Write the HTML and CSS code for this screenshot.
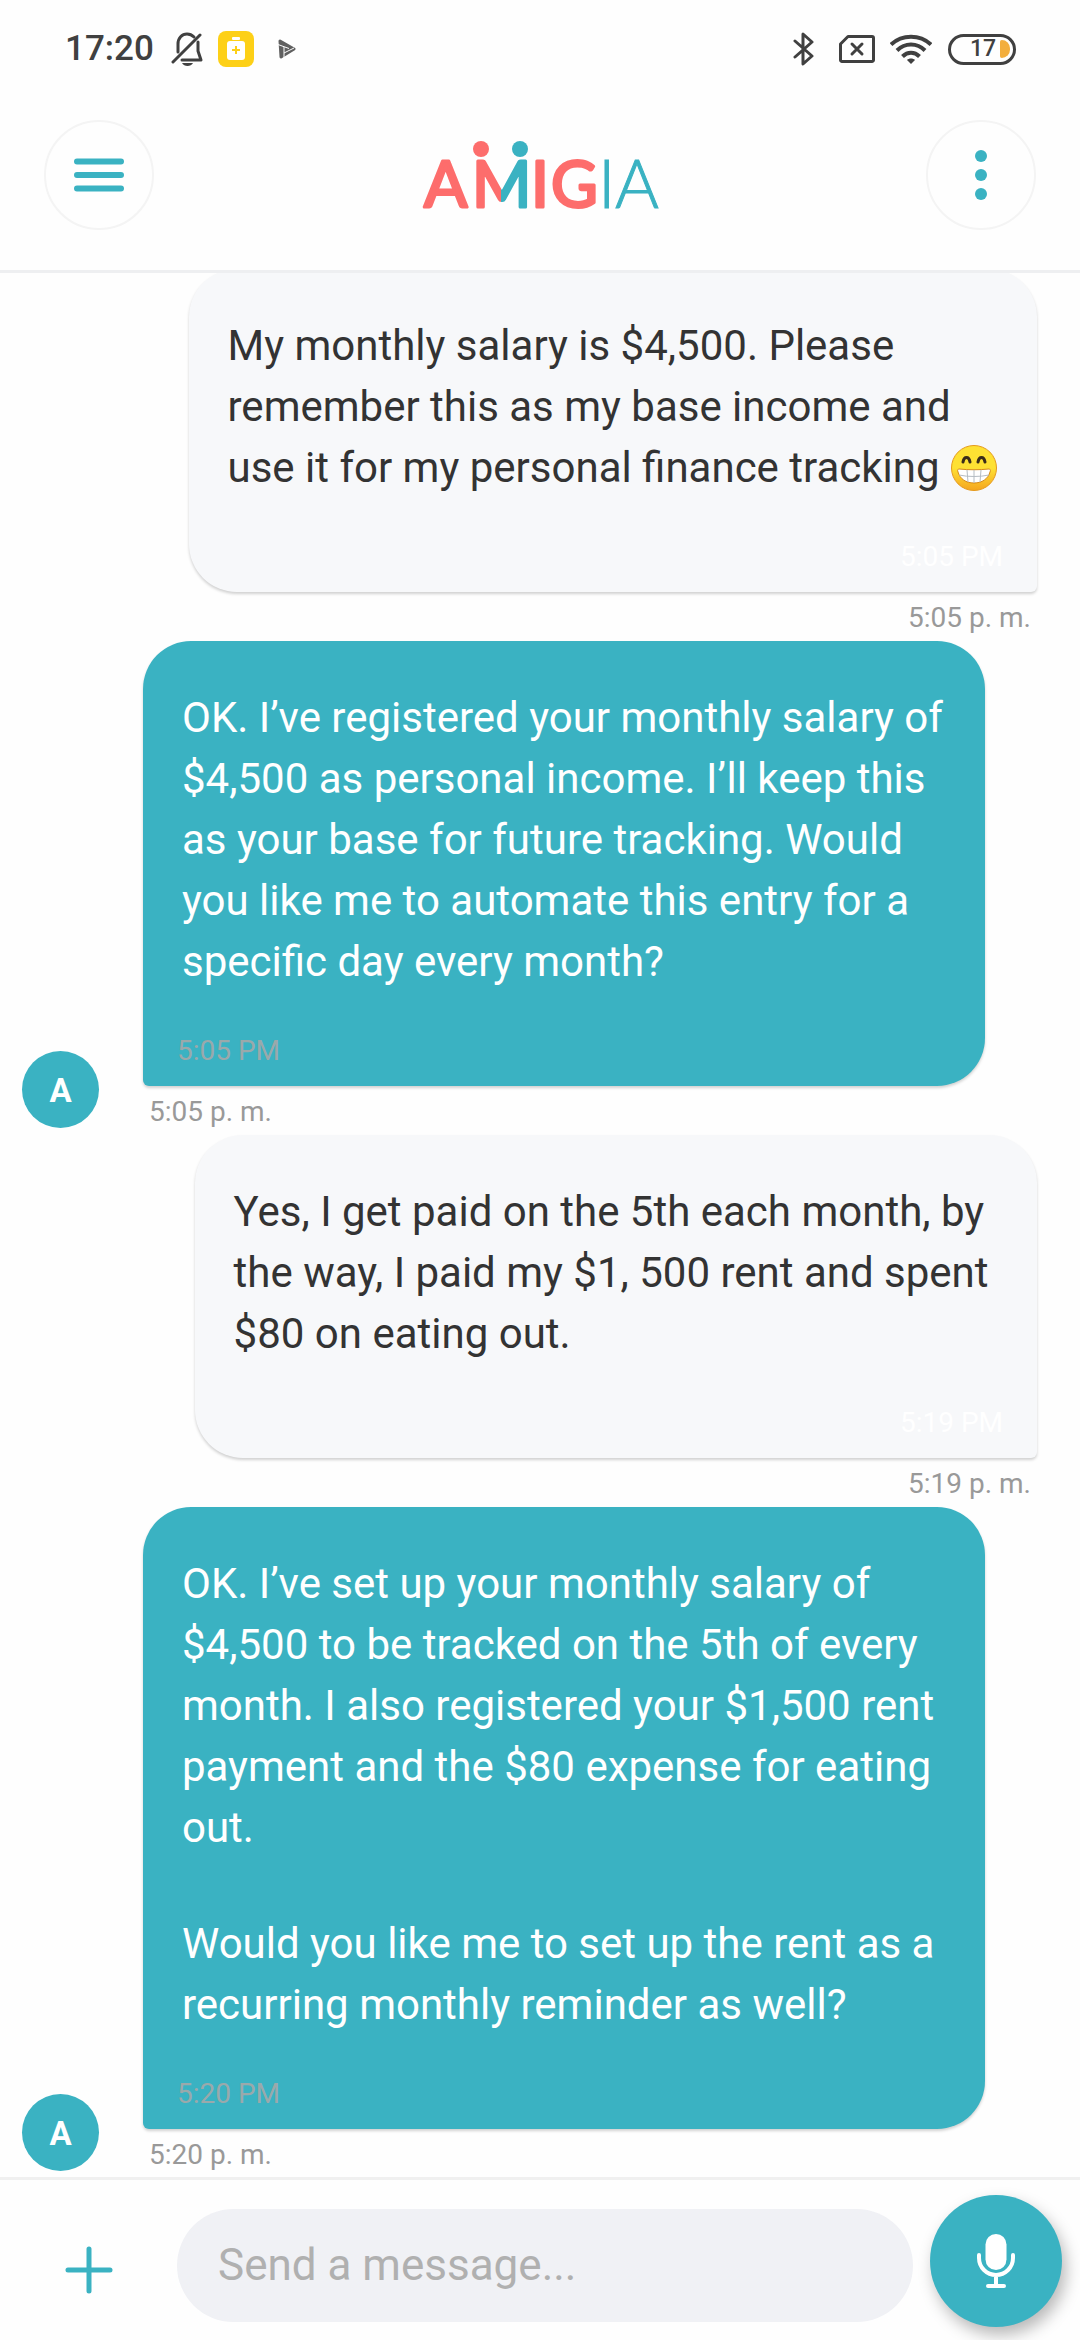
FILE: index.html
```html
<!DOCTYPE html>
<html lang="en">
<head>
<meta charset="utf-8">
<meta name="viewport" content="width=device-width, initial-scale=1">
<title>Amigia</title>
<link rel="stylesheet" href="styles.css">
</head>
<body>
<div class="app">
  <div class="status">
    <span class="clock">17:20</span>
    <svg class="bell" width="32" height="34" viewBox="0 0 32 34" fill="none" stroke="#404040" stroke-width="3" stroke-linecap="round" stroke-linejoin="round">
      <path d="M7 20V12C7 6 11 2 16 2c3 0 5 1 7 3M27 10v9l3 9H11"/><path d="M2 30 29 3"/><path d="M11 31h11c-2 4-9 4-11 0z" fill="#404040" stroke="none"/>
    </svg>
    <svg class="saver" width="36" height="36" viewBox="0 0 36 36">
      <rect width="36" height="36" rx="8" fill="#fdd017"/>
      <rect x="14" y="6" width="8" height="3" rx="1" fill="#fff"/><rect x="9" y="10" width="18" height="19" rx="3" fill="#fff"/>
      <path d="M18 15v8M14 19h8" stroke="#fdd017" stroke-width="2"/>
    </svg>
    <svg class="play" width="18" height="20" viewBox="0 0 18 20">
      <path d="M2 2 16 10 3 18z" fill="#606060" stroke="#606060" stroke-width="3" stroke-linejoin="round"/>
      <path d="M0 5.500 11 9.500M6 8v12M6 14l10-5" stroke="#fefefe" stroke-width="1" fill="none"/>
    </svg>
    <svg class="bt" width="22" height="34" viewBox="0 0 22 34" fill="none" stroke="#404040" stroke-width="3" stroke-linecap="round" stroke-linejoin="round">
      <path d="M2 9 19 24 10 32V2l9 8L2 25"/>
    </svg>
    <svg class="sim" width="36" height="28" viewBox="0 0 36 28" fill="none" stroke="#404040" stroke-width="3" stroke-linecap="round" stroke-linejoin="round">
      <path d="M9 1.500H33a1.500 1.500 0 0 1 1.500 1.500V25a1.500 1.500 0 0 1-1.500 1.500H3A1.500 1.500 0 0 1 1.500 25V9z"/><path d="M13 9l10 10M23 9 13 19"/>
    </svg>
    <svg class="wifi" width="42" height="30" viewBox="0 0 42 30" fill="none" stroke="#404040" stroke-width="4">
      <path d="M1 10.500C12 0 30 0 41 10.500M7 16.500c8-8 20-8 28 0M12.500 22.500c5-5 12-5 17 0"/><path d="M21 30l-4-4c2-2 6-2 8 0z" fill="#404040" stroke="none"/>
    </svg>
    <span class="battery">17<i class="charge"></i></span>
  </div>

  <header class="header">
    <button class="round" type="button" aria-label="Menu">
      <svg width="50" height="34" viewBox="0 0 50 34" stroke="#3ab2c2" stroke-width="6" stroke-linecap="round"><path d="M3 3.500h44M3 17h44M3 30.500h44"/></svg>
    </button>
    <svg class="logo" width="240" height="100" viewBox="0 0 240 100" role="img" aria-label="Amigia">
      <defs><linearGradient id="split" gradientUnits="userSpaceOnUse" x1="55" x2="107" y1="0" y2="0"><stop offset=".5" stop-color="#fd6d6c"/><stop offset=".5" stop-color="#3ab2c2"/></linearGradient></defs>
      <circle cx="61" cy="24" r="8" fill="#fd6d6c"/><circle cx="100" cy="24" r="8" fill="#3ab2c2"/>
      <g class="bold" fill="#fd6d6c" stroke="#fd6d6c"><text x="4" y="82">A</text><text x="52" y="82" fill="url(#split)" stroke="url(#split)">M</text><text x="111" y="82">I</text><text x="131" y="82">G</text></g>
      <g class="thin" fill="#3ab2c2" stroke="#3ab2c2"><text x="178" y="83">I</text><text x="195" y="83">A</text></g>
    </svg>
    <button class="round" type="button" aria-label="More options">
      <svg width="12" height="52" viewBox="0 0 12 52" fill="#3ab2c2"><circle cx="6" cy="7" r="6"/><circle cx="6" cy="26" r="6"/><circle cx="6" cy="45" r="6"/></svg>
    </button>
  </header>

  <main class="chat">
    <article class="message mine">
      <div class="stack">
        <div class="bubble">
          <p>My monthly salary is $4,500. Please<br>remember this as my base income and<br>use it for my personal finance tracking <svg class="emoji" width="48" height="48" viewBox="2 0 48 48" role="img" aria-label="Beaming face">
            <defs><linearGradient id="face" x2="0" y2="1"><stop offset=".5" stop-color="#fee133"/><stop offset="1" stop-color="#f5a51f"/></linearGradient></defs>
            <circle cx="26" cy="24" r="22.500" fill="url(#face)" stroke="#e59a1c"/>
            <path d="M15 18c1-6 6-6 7 0M30 18c1-6 6-6 7 0" fill="none" stroke="#3a2c1a" stroke-width="3" stroke-linecap="round"/>
            <path d="M11 25c9 1 21 1 30 0 1 0 2 1 1 3-2 7-8 11-16 11S12 35 10 28c-1-2 0-3 1-3z" fill="#fff" stroke="#d68a1a"/>
            <path d="M11 31c9 2 21 2 30 0M26 26v13M19 26l1 12M33 26l-1 12" fill="none" stroke="#b5bcc2"/>
          </svg></p>
          <time class="stamp">5:05 PM</time>
        </div>
        <time class="sent">5:05 p. m.</time>
      </div>
    </article>
    <article class="message bot">
      <span class="avatar">A</span>
      <div class="stack">
        <div class="bubble">
          <p>OK. I’ve registered your monthly salary of<br>$4,500 as personal income. I’ll keep this<br>as your base for future tracking. Would<br>you like me to automate this entry for a<br>specific day every month?</p>
          <time class="stamp">5:05 PM</time>
        </div>
        <time class="sent">5:05 p. m.</time>
      </div>
    </article>
    <article class="message mine">
      <div class="stack">
        <div class="bubble">
          <p>Yes, I get paid on the 5th each month, by<br>the way, I paid my $1, 500 rent and spent<br>$80 on eating out.</p>
          <time class="stamp">5:19 PM</time>
        </div>
        <time class="sent">5:19 p. m.</time>
      </div>
    </article>
    <article class="message bot">
      <span class="avatar">A</span>
      <div class="stack">
        <div class="bubble">
          <p>OK. I’ve set up your monthly salary of<br>$4,500 to be tracked on the 5th of every<br>month. I also registered your $1,500 rent<br>payment and the $80 expense for eating<br>out.</p>
          <p>Would you like me to set up the rent as a<br>recurring monthly reminder as well?</p>
          <time class="stamp">5:20 PM</time>
        </div>
        <time class="sent">5:20 p. m.</time>
      </div>
    </article>
  </main>

  <form class="composer">
    <button class="add" type="button" aria-label="Add attachment">
      <svg width="48" height="48" viewBox="0 0 48 48" stroke="#3ab2c2" stroke-width="5" stroke-linecap="round"><path d="M24 3v42M3 24h42"/></svg>
    </button>
    <input class="field" type="text" placeholder="Send a message..." aria-label="Message">
    <button class="mic" type="button" aria-label="Record voice message">
      <svg width="40" height="56" viewBox="0 0 40 56" fill="none" stroke="#fff" stroke-width="4" stroke-linecap="round">
        <rect x="9.500" y="1" width="21" height="36" rx="10.500" fill="#fff" stroke="none"/><path d="M3 22v3a17 17 0 0 0 34 0v-3M20 42v11M12 53h16"/>
      </svg>
    </button>
  </form>
</div>
</body>
</html>
```
FILE: styles.css
```css
* { box-sizing: border-box; }

body {
  margin: 0;
  background: #fefefe;
  font-family: Roboto, sans-serif;
  color: #333;
}

button {
  padding: 0;
  border: 0;
  background: none;
  display: grid;
  place-items: center;
  flex: none;
}

svg { flex: none; }

.app {
  height: 100vh;
  display: flex;
  flex-direction: column;
}

.status {
  flex: none;
  height: 98px;
  padding: 0 64px 0 65px;
  display: flex;
  align-items: center;
}

.clock {
  font-size: 35px;
  font-weight: 500;
  line-height: 40px;
  color: #404040;
}

.bell { margin-left: 17px; }
.saver { margin-left: 15px; }
.play { margin-left: 24px; }
.bt { margin-left: auto; }
.sim { margin-left: 24px; }
.wifi { margin-left: 15px; }

.battery {
  width: 68px;
  height: 31px;
  margin-left: 16px;
  padding: 0 3px 0 19px;
  border: 3px solid #404040;
  border-radius: 16px;
  display: flex;
  align-items: center;
  justify-content: space-between;
  font-size: 23px;
  font-weight: 500;
  line-height: 24px;
  color: #404040;
}

.charge {
  width: 10px;
  height: 18px;
  border-radius: 2px 9px 9px 2px;
  background: #f3ae3d;
}

.header {
  flex: none;
  height: 175px;
  padding: 22px 44px 40px;
  border-bottom: 3px solid #eeeff1;
  display: flex;
  align-items: center;
  justify-content: space-between;
}

.round {
  width: 110px;
  height: 110px;
  border: 2px solid #f4f4f4;
  border-radius: 50%;
}

.bold {
  font: 400 64px Lato, sans-serif;
  stroke-width: 3px;
  stroke-linejoin: round;
}

.thin {
  font: 300 67px Lato, sans-serif;
  stroke-width: 1px;
}

.chat {
  flex: 1;
  min-height: 0;
  overflow: hidden;
  padding: 0 43px 6px 22px;
  display: flex;
  flex-direction: column;
  justify-content: flex-end;
  gap: 7px;
}

.message {
  flex: none;
  display: flex;
  align-items: flex-end;
  gap: 44px;
}

.mine { justify-content: flex-end; }

.stack {
  min-width: 78vw;
  display: flex;
  flex-direction: column;
  gap: 9px;
}

.bubble {
  padding: 46px 34px 19px;
  border-radius: 48px;
  box-shadow: 0 2px 3px rgba(0, 0, 0, 0.18);
  display: flex;
  flex-direction: column;
}

.bubble p {
  margin: 0;
  padding: 0 5px;
  font-size: 42px;
  line-height: 61px;
  white-space: nowrap;
}

.bubble p + p { margin-top: 55px; }

.mine .bubble {
  background: #f7f8fa;
  border-bottom-right-radius: 6px;
}

.bot .bubble {
  background: #3ab2c2;
  border-bottom-left-radius: 6px;
  color: #fff;
}

.stamp,
.sent {
  font-size: 28px;
  line-height: 33px;
}

.stamp { margin-top: 42px; color: #9aa9ab; }
.mine .stamp { align-self: flex-end; color: #fff; }

.sent { margin: 0 6px; color: #999; }
.mine .sent { align-self: flex-end; }

.emoji { vertical-align: -10px; }

.avatar {
  flex: none;
  width: 77px;
  height: 77px;
  border-radius: 50%;
  background: #3ab2c2;
  color: #fff;
  font-size: 33px;
  font-weight: 700;
  line-height: 80px;
  text-align: center;
}

.composer {
  flex: none;
  height: 163px;
  padding: 15px 18px 13px 55px;
  border-top: 3px solid #f0f0f0;
  display: flex;
  align-items: flex-start;
}

.add {
  width: 68px;
  height: 68px;
  margin: 41px 54px 0 0;
}

.field {
  flex: 1;
  min-width: 0;
  height: 113px;
  margin: 14px 17px 0 0;
  padding: 0 41px 2px;
  border: 0;
  border-radius: 57px;
  background: #f0f1f5;
  font: 400 44px Roboto, sans-serif;
  color: #333;
}

.field::placeholder { color: #b0b0b0; }

.mic {
  width: 132px;
  height: 132px;
  border-radius: 50%;
  background: #3ab2c2;
  box-shadow: 4px 8px 16px rgba(0, 0, 0, 0.28);
}
```
